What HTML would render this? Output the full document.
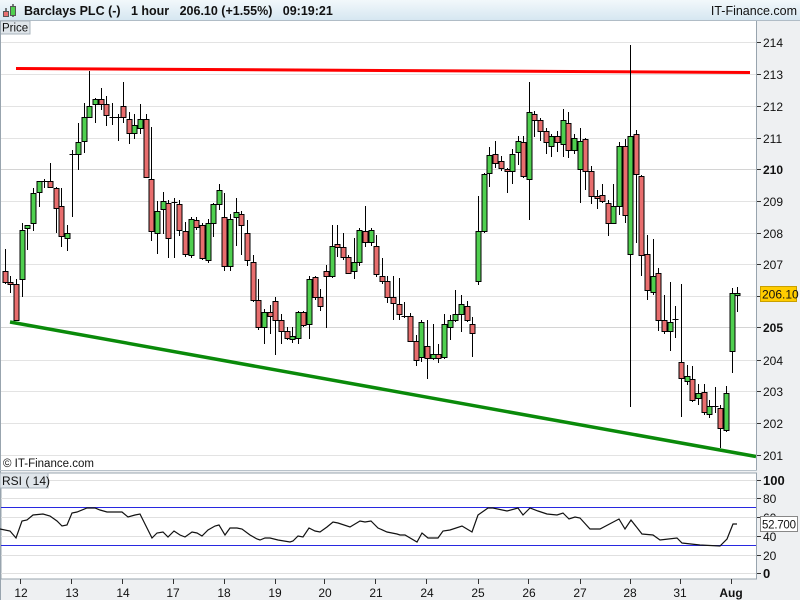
<!DOCTYPE html>
<html><head><meta charset="utf-8"><style>
html,body{margin:0;padding:0;width:800px;height:600px;overflow:hidden;background:#eef0f2;font-family:"Liberation Sans",Arial,sans-serif}
</style></head><body>
<svg width="800" height="600" xmlns="http://www.w3.org/2000/svg" style="position:absolute;left:0;top:0" font-family="Liberation Sans, Arial, sans-serif">
<defs><linearGradient id="hg" x1="0" y1="0" x2="0" y2="1"><stop offset="0" stop-color="#f2f8fb"/><stop offset="1" stop-color="#d6e7f1"/></linearGradient></defs>
<rect x="0" y="0" width="800" height="600" fill="#eef0f2"/>
<rect x="0" y="0" width="800" height="20" fill="url(#hg)"/>
<line x1="0" y1="20.5" x2="800" y2="20.5" stroke="#b0bcc6"/>
<path d="M6 8V17M13 4V17" stroke="#000" stroke-width="1"/>
<rect x="3.5" y="11.5" width="5" height="5" fill="#e87070" stroke="#555"/>
<rect x="10.5" y="6.5" width="5" height="9" fill="#50d050" stroke="#555"/>
<text x="24" y="15" font-size="12.5" font-weight="bold" fill="#111" xml:space="preserve">Barclays PLC (-)   1 hour   206.10 (+1.55%)   09:19:21</text>
<text x="797" y="15" font-size="12.5" text-anchor="end" fill="#111">IT-Finance.com</text>
<rect x="1" y="21" width="755.5" height="449" fill="#fff"/>
<g stroke="#e3e3e3" stroke-width="1">
<path d="M1 42.5H756M1 74.5H756M1 106.5H756M1 138.5H756M1 201.5H756M1 233.5H756M1 264.5H756M1 296.5H756M1 360.5H756M1 391.5H756M1 423.5H756M1 455.5H756"/>
<path d="M1 169.5H756M1 327.5H756" stroke="#d4d4d4"/>
</g>
<rect x="0" y="21" width="30" height="13" fill="#dfe5ea" stroke="#aab4bc"/>
<text x="2" y="31.5" font-size="11.5" fill="#111">Price</text>
<line x1="16" y1="68.5" x2="750" y2="72.5" stroke="#ff0000" stroke-width="3"/>
<line x1="10" y1="322" x2="756" y2="456.5" stroke="#0a8a0a" stroke-width="3.5"/>
<g id="c" stroke="#000" stroke-width="1"></g>
<text x="3" y="467" font-size="11.5" fill="#111">© IT-Finance.com</text>
<path d="M0.5 21V600" stroke="#98a4ae"/>
<line x1="756.5" y1="21" x2="756.5" y2="470" stroke="#98a4ae"/>
<line x1="0" y1="470.5" x2="757" y2="470.5" stroke="#b8c2ca"/>
<g font-size="12" fill="#111">
<g stroke="#333"><path d="M757 42.5h4M757 74.5h4M757 106.5h4M757 138.5h4M757 169.5h4M757 201.5h4M757 233.5h4M757 264.5h4M757 296.5h4M757 327.5h4M757 360.5h4M757 391.5h4M757 423.5h4M757 455.5h4"/></g>
<text x="763" y="47">214</text><text x="763" y="79">213</text><text x="763" y="111">212</text><text x="763" y="143">211</text>
<text x="763" y="174" font-weight="bold">210</text><text x="763" y="206">209</text><text x="763" y="238">208</text><text x="763" y="269">207</text>
<text x="763" y="332" font-weight="bold">205</text><text x="763" y="365">204</text><text x="763" y="396">203</text><text x="763" y="428">202</text><text x="763" y="460">201</text>
</g>
<rect x="760.5" y="286.5" width="36" height="15" fill="#ffcc00" stroke="#c9a000"/>
<text x="762" y="298.5" font-size="12" fill="#111">206.10</text>
<rect x="1" y="473" width="755.5" height="106" fill="#fff" stroke="#98a4ae"/>
<g stroke="#e0e0e0"><path d="M1 480.5H756M1 498.5H756M1 517.5H756M1 536.5H756M1 555.5H756M1 573.5H756"/></g>
<g stroke="#2828e0"><path d="M1 507.5H756M1 545.5H756"/></g>
<rect x="0" y="473" width="48" height="15" fill="#dfe5ea" stroke="#aab4bc"/>
<text x="2" y="485" font-size="12" fill="#111">RSI ( 14)</text>
<polyline fill="none" stroke="#111" stroke-width="1.2" points="0,529 10,531 16,538 22,521 27,520 33,515 43,514 50,516 57,521 62,526 67,525 72,513 77,512 87,508 95,508 100,510 107,512 122,512 128,517 135,515 140,514 152,538 157,533 163,532 168,537 174,531 180,535 185,537 192,532 197,533 202,536 208,530 215,526 219,525 225,535 230,528 237,528 242,529 250,535 257,539 260,540 265,538 270,538 278,540 290,542 293,541 298,536 303,537 309,528 315,531 320,532 327,527 333,522 338,523 350,527 360,521 365,522 371,521 378,528 387,532 397,534 400,535 405,535 417,542 422,533 428,538 438,538 443,531 450,530 462,526 472,532 478,515 488,508 493,508 507,511 518,508 523,515 530,508 538,511 547,514 557,515 563,513 569,519 575,517 580,518 590,529 600,529 619,519 625,529 631,520 642,534 653,535 660,540 677,538 682,543 700,545 720,546 727,539 733,524 737,524"/>
<g font-size="12" fill="#111">
<g stroke="#333"><path d="M757 480.5h4M757 498.5h4M757 517.5h4M757 536.5h4M757 555.5h4M757 573.5h4"/></g>
<text x="763" y="485" font-weight="bold" font-size="13">100</text><text x="763" y="503">80</text><text x="763" y="522">60</text><text x="763" y="541">40</text><text x="763" y="560">20</text><text x="763" y="578" font-weight="bold" font-size="13">0</text>
</g>
<rect x="760.5" y="516.5" width="37" height="15" fill="#fff" stroke="#888"/>
<text x="762" y="528.5" font-size="11.5" fill="#111" textLength="34">52.700</text>
<g stroke="#333"><path d="M20.5 579v5M71.5 579v5M122.5 579v5M173.5 579v5M224.5 579v5M275.5 579v5M324.5 579v5M375.5 579v5M426.5 579v5M478.5 579v5M528.5 579v5M580.5 579v5M630.5 579v5M680.5 579v5M731.5 579v5"/></g>
<g font-size="12" fill="#111" text-anchor="middle">
<text x="21" y="597">12</text><text x="72" y="597">13</text><text x="123" y="597">14</text><text x="173" y="597">17</text><text x="224" y="597">18</text><text x="275" y="597">19</text><text x="325" y="597">20</text><text x="376" y="597">21</text><text x="427" y="597">24</text><text x="478" y="597">25</text><text x="529" y="597">26</text><text x="580" y="597">27</text><text x="630" y="597">28</text><text x="680" y="597">31</text><text x="731" y="597" font-weight="bold">Aug</text>
</g>
</svg>
<script>
var d=[[5,271,282,249,284,'r'],[10,282,284,276,293,'r'],[16,284,320,279,321,'r'],[22,230,279,223,297,'g'],[27,225,228,225,250,'g'],[33,193,223,188,231,'g'],[39,181,192,181,207,'g'],[44,181,182,179,188,'d'],[50,181,187,163,188,'r'],[56,188,208,187,233,'r'],[61,206,236,188,247,'r'],[67,233,238,225,251,'g'],[72,154,155,150,217,'d'],[78,142,154,123,170,'g'],[84,117,141,103,153,'g'],[89,106,117,71,117,'g'],[95,99,104,98,123,'g'],[101,99,104,88,110,'r'],[106,104,115,96,126,'r'],[112,117,118,103,125,'d'],[118,117,118,114,141,'d'],[123,106,117,82,123,'r'],[129,119,133,112,144,'r'],[134,125,133,114,139,'g'],[140,119,128,104,134,'g'],[146,119,177,114,177,'r'],[151,179,231,127,241,'r'],[157,211,233,201,254,'g'],[163,201,209,192,234,'g'],[168,203,238,200,258,'r'],[174,202,203,198,258,'d'],[179,204,230,200,236,'r'],[185,231,254,222,257,'r'],[191,219,255,217,258,'g'],[196,220,227,217,230,'r'],[202,225,258,223,260,'r'],[208,223,260,219,263,'g'],[213,204,223,203,237,'g'],[219,190,204,184,210,'g'],[224,217,266,193,271,'r'],[230,219,266,214,271,'g'],[236,212,217,198,246,'g'],[241,214,225,211,255,'r'],[247,233,260,220,266,'r'],[253,262,300,255,302,'r'],[258,300,327,279,330,'r'],[264,312,327,309,344,'g'],[270,312,316,305,334,'r'],[275,301,320,297,355,'r'],[281,320,331,314,344,'r'],[287,331,338,327,340,'r'],[292,336,339,327,343,'g'],[298,312,338,311,344,'g'],[303,312,325,311,327,'r'],[309,279,324,276,339,'g'],[315,277,297,276,300,'r'],[320,297,306,289,311,'r'],[326,271,276,265,328,'r'],[332,246,276,225,278,'g'],[337,244,247,225,257,'r'],[343,247,257,233,260,'r'],[348,257,273,255,274,'r'],[354,262,271,238,279,'g'],[359,230,262,228,266,'g'],[365,231,242,206,247,'r'],[371,230,242,228,246,'g'],[376,246,274,235,277,'r'],[382,276,281,258,284,'r'],[387,281,297,276,303,'r'],[393,297,303,276,320,'r'],[399,304,314,278,320,'r'],[404,316,317,302,318,'d'],[410,316,341,313,342,'r'],[416,341,360,335,366,'r'],[421,322,357,320,362,'g'],[427,346,358,320,379,'r'],[433,354,358,324,360,'g'],[438,354,358,344,363,'r'],[444,324,357,314,359,'g'],[450,320,327,315,340,'g'],[455,314,320,290,322,'g'],[461,304,314,295,332,'g'],[467,306,320,301,322,'r'],[472,324,333,317,357,'r'],[478,231,281,196,285,'g'],[484,174,231,173,233,'g'],[489,155,173,147,187,'g'],[495,154,163,141,168,'r'],[501,161,168,156,171,'r'],[507,169,171,168,193,'r'],[512,154,171,149,184,'g'],[518,141,152,136,165,'g'],[523,142,176,136,178,'r'],[529,112,179,82,220,'g'],[534,114,120,111,137,'r'],[540,120,131,118,141,'r'],[546,131,142,128,154,'r'],[551,136,146,134,157,'g'],[557,136,142,131,152,'r'],[563,120,144,109,157,'g'],[568,123,150,112,158,'r'],[574,138,150,134,154,'g'],[580,141,169,128,203,'g'],[585,139,171,138,190,'r'],[591,171,196,166,204,'r'],[597,196,198,190,209,'r'],[602,195,201,184,203,'r'],[608,203,223,200,236,'r'],[613,206,223,184,224,'g'],[619,146,206,142,215,'g'],[625,146,215,139,223,'r'],[630,136,254,45,407,'g'],[636,134,174,130,243,'r'],[641,176,255,175,276,'r'],[647,254,290,235,300,'r'],[653,276,292,239,295,'g'],[658,273,320,268,331,'r'],[664,320,331,295,334,'r'],[670,322,331,282,351,'g'],[675,319,320,306,338,'d'],[681,362,378,284,417,'r'],[687,376,381,365,385,'g'],[692,379,400,366,402,'r'],[698,393,398,384,405,'g'],[704,392,412,384,415,'r'],[709,406,414,400,418,'g'],[715,406,407,387,413,'d'],[720,408,428,405,448,'r'],[726,393,430,386,432,'g'],[732,293,351,288,373,'g'],[737,293,295,287,312,'g']];
var s='';d.forEach(function(c){var x=c[0]+0.5;s+='<path d="M'+x+' '+c[3]+'V'+c[4]+'"/>';
if(c[5]=='d'){s+='<path d="M'+(x-3)+' '+(c[1]+0.5)+'h6"/>';}else{s+='<rect x="'+(c[0]-2)+'" y="'+(c[1]+0.5)+'" width="5" height="'+Math.max(2,c[2]-c[1])+'" fill="'+(c[5]=='g'?'#4fcf4f':'#e86e6e')+'"/>';}});
document.getElementById('c').innerHTML=s;
</script>
</body></html>
